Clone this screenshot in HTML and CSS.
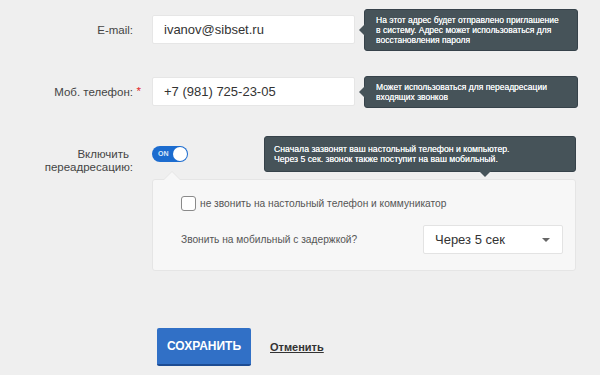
FILE: index.html
```html
<!DOCTYPE html>
<html lang="ru">
<head>
  <meta charset="UTF-8">
  <meta name="viewport" content="width=device-width, initial-scale=1.0">
  <title>Сотрудник</title>
  <link rel="stylesheet" href="styles.css">
</head>
<body>

  <form class="form">

    <!-- E-mail -->
    <div class="row">
      <label class="label" for="email">E-mail:</label>
      <input class="input" id="email" type="text" value="ivanov@sibset.ru">
      <div class="hint hint-left">На этот адрес будет отправлено приглашение<br>в систему. Адрес может использоваться для<br>восстановления пароля</div>
    </div>

    <!-- Phone -->
    <div class="row">
      <label class="label" for="phone">Моб. телефон:<span class="required">*</span></label>
      <input class="input" id="phone" type="text" value="+7 (981) 725-23-05">
      <div class="hint hint-left">Может использоваться для переадресации<br>входящих звонков</div>
    </div>

    <!-- Forwarding -->
    <div class="row row-top">
      <div class="label label-multi"><span class="first-line">Включить</span><br>переадресацию:</div>
      <div class="toggle on">
        <span class="toggle-text">ON</span>
        <span class="toggle-knob"></span>
      </div>
    </div>

    <div class="panel">
      <div class="hint hint-bottom">Сначала зазвонят ваш настольный телефон и компьютер.<br>Через 5 сек. звонок также поступит на ваш мобильный.</div>
      <label class="check-row">
        <span class="checkbox"></span>
        не звонить на настольный телефон и коммуникатор
      </label>
      <div class="delay-row">
        <span>Звонить на мобильный с задержкой?</span>
        <div class="select">
          Через 5 сек
          <span class="caret"></span>
        </div>
      </div>
    </div>

    <div class="actions">
      <button class="button" type="button">СОХРАНИТЬ</button>
      <a class="cancel" href="#">Отменить</a>
    </div>

  </form>

</body>
</html>
```

FILE: styles.css
```css
/* General Reset */
* {
  margin: 0;
  padding: 0;
  box-sizing: border-box;
  font-family: "Liberation Sans", Arial, sans-serif;
}

body {
  background-color: #efefef;
  color: #444;
  width: 600px;
  height: 375px;
  overflow: hidden;
}

.form {
  padding-top: 15px;
}

/* Form rows */
.row {
  display: flex;
  align-items: center;
  height: 29px;
  margin-bottom: 33px;
}

.row-top {
  align-items: flex-start;
  height: 28px;
  margin-top: 40px;
  margin-bottom: 5px;
}

.label {
  position: relative;
  width: 133px;
  margin-right: 19px;
  text-align: right;
  font-size: 11.5px;
  color: #444;
}

.label-multi {
  padding-top: 2px;
  line-height: 13px;
}

.first-line {
  margin-right: 4px;
}

.required {
  position: absolute;
  right: -8px;
  top: -1px;
  color: #e3262b;
}

.input {
  width: 203px;
  height: 29px;
  border: 1px solid #e6e6e6;
  border-radius: 2px;
  background: #fff;
  padding: 0 11px;
  font-size: 13px;
  color: #333;
  outline: none;
}

/* Tooltips */
.hint {
  position: relative;
  background-color: #465359;
  border: 1px solid #36424a;
  border-radius: 3px;
  color: #f4f6f7;
  font-size: 8.5px;
  line-height: 10px;
  white-space: nowrap;
  text-shadow: 0 0 0.4px #fff;
}

.hint-left {
  width: 214px;
  margin-left: 9px;
  padding: 5px 11px 5px;
}

.hint-left::before {
  content: "";
  position: absolute;
  left: -6px;
  top: 50%;
  margin-top: -6px;
  border-top: 6px solid transparent;
  border-bottom: 6px solid transparent;
  border-right: 6px solid #465359;
}

.hint-bottom {
  position: absolute;
  right: -1px;
  bottom: 100%;
  margin-bottom: 8px;
  width: 312px;
  padding: 7px 9px 7px;
  font-size: 8.7px;
}

.hint-bottom::after {
  content: "";
  position: absolute;
  right: 84px;
  bottom: -6px;
  border-left: 6px solid transparent;
  border-right: 6px solid transparent;
  border-top: 6px solid #465359;
}

/* Toggle */
.toggle {
  position: relative;
  width: 36px;
  height: 16px;
  border-radius: 8px;
  background-color: #1c6ccf;
}

.toggle-text {
  position: absolute;
  left: 6px;
  top: 4px;
  font-size: 7px;
  line-height: 8px;
  font-weight: bold;
  color: #dbe8f8;
}

.toggle-knob {
  position: absolute;
  right: 1px;
  top: 1px;
  width: 14px;
  height: 14px;
  border-radius: 50%;
  background: #fff;
}

/* Panel */
.panel {
  position: relative;
  width: 424px;
  margin-left: 152px;
  padding: 16px 12px 16px 28px;
  background-color: #f7f7f7;
  border: 1px solid #e5e5e5;
  border-radius: 3px;
  font-size: 10.2px;
  color: #555;
}

.panel::before,
.panel::after {
  content: "";
  position: absolute;
  left: 10px;
  border-left: 9px solid transparent;
  border-right: 9px solid transparent;
}

.panel::before {
  top: -9px;
  border-bottom: 9px solid #e5e5e5;
}

.panel::after {
  top: -8px;
  border-bottom: 9px solid #f7f7f7;
}

.check-row {
  display: flex;
  align-items: center;
  gap: 4px;
  height: 15px;
  margin-bottom: 14px;
}

.checkbox {
  width: 15px;
  height: 15px;
  border: 1px solid #8a8a8a;
  border-radius: 3px;
  background: #fff;
}

.delay-row {
  display: flex;
  align-items: center;
  justify-content: space-between;
}

.select {
  position: relative;
  width: 140px;
  height: 29px;
  border: 1px solid #e3e3e3;
  border-radius: 2px;
  background: #fff;
  padding: 0 11px;
  line-height: 27px;
  font-size: 13px;
  color: #333;
}

.caret {
  position: absolute;
  right: 12px;
  top: 12px;
  border-left: 4px solid transparent;
  border-right: 4px solid transparent;
  border-top: 4px solid #666;
}

/* Actions */
.actions {
  display: flex;
  align-items: center;
  gap: 19px;
  margin-top: 57px;
  margin-left: 157px;
}

.button {
  width: 94px;
  height: 38px;
  background-color: #3170c6;
  border: none;
  border-bottom: 2px solid #1d4c93;
  border-radius: 2px;
  color: #fff;
  font-size: 12px;
  font-weight: bold;
  cursor: pointer;
}

.cancel {
  font-size: 11px;
  font-weight: bold;
  color: #333;
  text-decoration: underline;
}
```
